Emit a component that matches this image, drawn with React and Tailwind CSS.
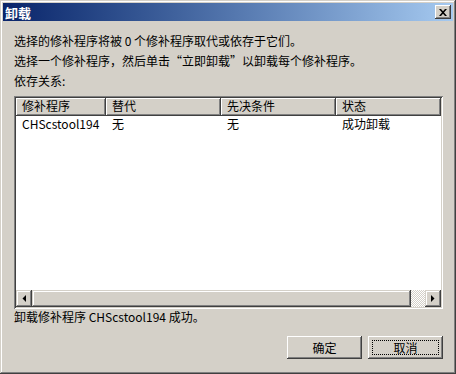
import React from 'react';

const FONT = "font-['Noto_Sans_CJK_SC','Noto_Sans',sans-serif]";
const RAISED = 'shadow-[inset_-1px_-1px_#404040,inset_1px_1px_#ffffff,inset_-2px_-2px_#808080,inset_2px_2px_#d4d0c8]';
const SCROLL_BTN = 'shadow-[inset_-1px_-1px_#404040,inset_1px_1px_#d4d0c8,inset_-2px_-2px_#808080,inset_2px_2px_#ffffff]';

const COLS = [
  { key: 'patch', label: '修补程序', w: 'w-[90px]' },
  { key: 'replace', label: '替代', w: 'w-[115px]' },
  { key: 'prereq', label: '先决条件', w: 'w-[115px]' },
  { key: 'status', label: '状态', w: 'flex-1' },
];

const ROWS = [
  { patch: 'CHScstool194', replace: '无', prereq: '无', status: '成功卸载' },
];

const Arrow = ({ dir }) => (
  <svg width="4" height="7" viewBox="0 0 4 7">
    {dir === 'left'
      ? <polygon points="4,0 4,7 0.5,3.5" fill="#000" />
      : <polygon points="0,0 0,7 3.5,3.5" fill="#000" />}
  </svg>
);

const Button = ({ children, focused }) => (
  <button className={`w-[75px] h-[23px] bg-[#d4d0c8] ${RAISED} flex p-[4px] text-[12px] text-black`}>
    <span className={`flex-1 flex items-center justify-center leading-none ${focused ? 'border border-dotted border-black' : 'border border-transparent'}`}>
      {children}
    </span>
  </button>
);

export default function App() {
  return (
    <div className={`w-[456px] h-[374px] bg-[#d4d0c8] p-[3px] flex flex-col ${FONT} text-[12px] text-black shadow-[inset_-1px_-1px_#404040,inset_1px_1px_#d4d0c8,inset_-2px_-2px_#808080,inset_2px_2px_#ffffff]`}>
      {/* Title bar */}
      <div className="h-[18px] flex items-center justify-between bg-gradient-to-r from-[#0a246a] to-[#a6caf0] pl-[2px] pr-[2px]">
        <span className="text-white font-bold text-[13px] leading-none">卸载</span>
        <button className={`w-[16px] h-[14px] bg-[#d4d0c8] ${RAISED} flex items-center justify-center`}>
          <svg width="8" height="7" viewBox="0 0 8 7">
            <path d="M0 0h2l2 2.3L6 0h2L5 3.5L8 7H6L4 4.7L2 7H0l3-3.5z" fill="#000" />
          </svg>
        </button>
      </div>

      {/* Body */}
      <div className="flex flex-col pl-[11px] pr-[10px]">
        <div className="mt-[12px] h-[16px] leading-[16px]">选择的修补程序将被 0 个修补程序取代或依存于它们。</div>
        <div className="mt-[4px] h-[16px] leading-[16px]">选择一个修补程序，然后单击“立即卸载”以卸载每个修补程序。</div>
        <div className="mt-[4px] h-[16px] leading-[16px]">依存关系:</div>

        {/* List view */}
        <div className="mt-[7px] h-[213px] p-[2px] bg-white flex shadow-[inset_1px_1px_#808080,inset_-1px_-1px_#ffffff,inset_2px_2px_#404040,inset_-2px_-2px_#d4d0c8]">
          <div className="flex-1 flex flex-col bg-white">
            <div className="h-[18px] flex">
              {COLS.map((c) => (
                <div key={c.key} className={`${c.w} h-[18px] bg-[#d4d0c8] ${RAISED} pl-[6px] pb-[2px] leading-[16px]`}>
                  {c.label}
                </div>
              ))}
            </div>
            {ROWS.map((r, i) => (
              <div key={i} className="h-[16px] flex">
                {COLS.map((c) => (
                  <div key={c.key} className={`${c.w} pl-[6px] leading-[16px]`}>{r[c.key]}</div>
                ))}
              </div>
            ))}
            <div className="flex-1" />
            {/* Horizontal scrollbar */}
            <div className="h-[17px] flex">
              <div className={`w-[16px] bg-[#d4d0c8] ${SCROLL_BTN} flex items-center justify-center`}>
                <Arrow dir="left" />
              </div>
              <div className={`w-[379px] bg-[#d4d0c8] ${SCROLL_BTN}`} />
              <div className="w-[14px] bg-[repeating-conic-gradient(#ffffff_0_25%,#d4d0c8_0_50%)] bg-size-[2px_2px]" />
              <div className={`w-[16px] bg-[#d4d0c8] ${SCROLL_BTN} flex items-center justify-center`}>
                <Arrow dir="right" />
              </div>
            </div>
          </div>
        </div>

        <div className="h-[16px] leading-[16px]">卸载修补程序 CHScstool194 成功。</div>

        <div className="mt-[11px] flex justify-end gap-[6px]">
          <Button>确定</Button>
          <Button focused>取消</Button>
        </div>
      </div>
    </div>
  );
}
